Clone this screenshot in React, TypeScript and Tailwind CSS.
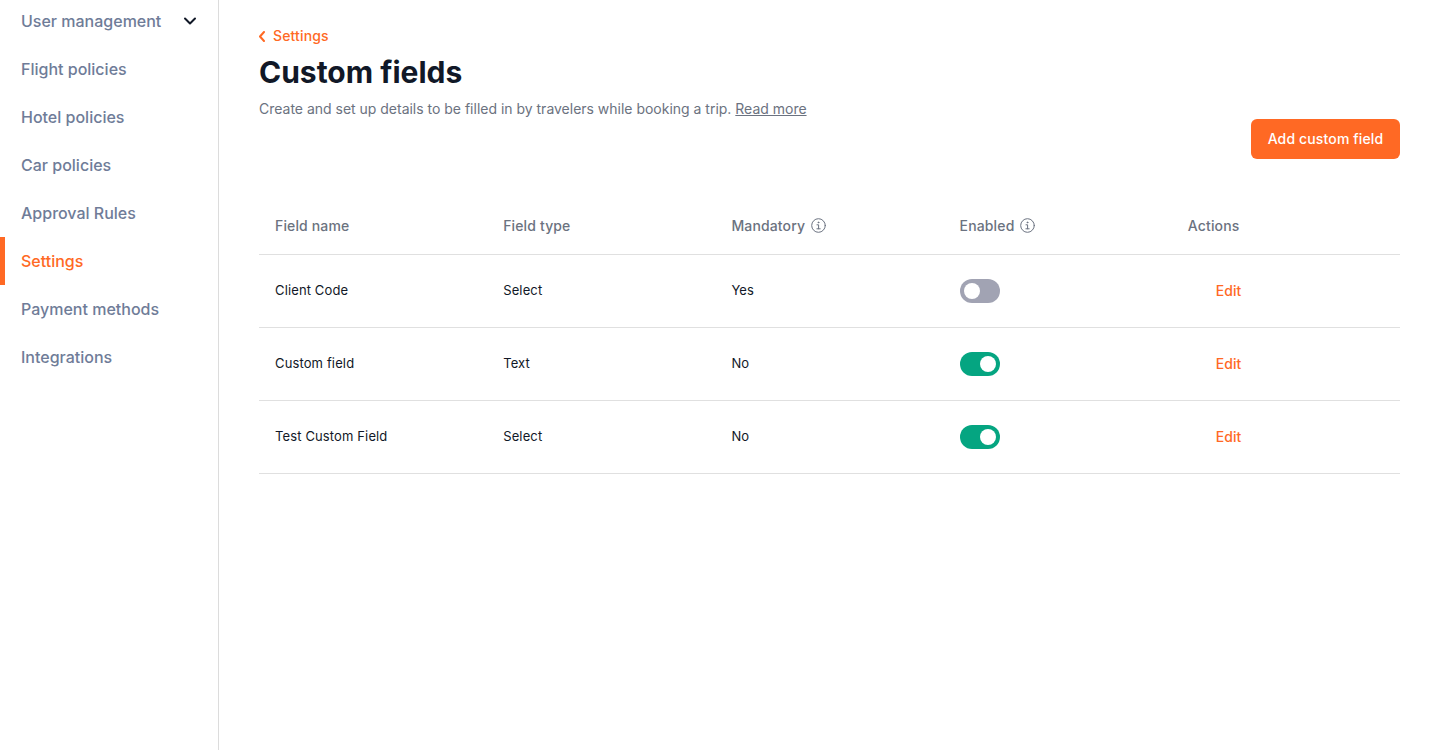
import React from 'react';

const navItems = ['User management', 'Flight policies', 'Hotel policies', 'Car policies', 'Approval Rules', 'Settings', 'Payment methods', 'Integrations'];

const rows = [
  { name: 'Client Code', type: 'Select', mandatory: 'Yes', enabled: false },
  { name: 'Custom field', type: 'Text', mandatory: 'No', enabled: true },
  { name: 'Test Custom Field', type: 'Select', mandatory: 'No', enabled: true },
];

const InfoIcon = () => (
  <svg width="15" height="15" viewBox="0 0 15 15" fill="none" stroke="#6b7280" strokeWidth="1" strokeLinecap="round" strokeLinejoin="round">
    <circle cx="7.5" cy="7.5" r="6.8" />
    <path d="M6 6.8H7.6V10.8M5.9 10.8H9.2" />
    <circle cx="7.4" cy="4.4" r="0.45" fill="#6b7280" />
  </svg>
);

const Toggle: React.FC<{ on: boolean }> = ({ on }) => (
  <div className={`flex h-6 w-10 items-center rounded-full px-1 ${on ? 'justify-end bg-[#05a581]' : 'justify-start bg-[#a1a3b3]'}`}>
    <div className="h-4 w-4 rounded-full bg-white" />
  </div>
);

export default function App() {
  return (
    <div className="flex h-[750px] overflow-hidden bg-white font-['Inter',sans-serif]">
      {/* Sidebar */}
      <aside className="w-[219px] shrink-0 border-r border-[#dcdcdc]">
        <nav className="-mt-[3px]">
          {navItems.map((item, i) => (
            <div
              key={item}
              className={`flex h-12 items-center justify-between border-l-[5px] pl-4 pr-[21px] text-base font-medium ${
                item === 'Settings' ? 'border-[#ff6924] text-[#ff6924]' : 'border-transparent text-[#6f7c98]'
              }`}
            >
              <span>{item}</span>
              {i === 0 && (
                <svg width="14" height="14" viewBox="0 0 14 14" fill="none" stroke="#111827" strokeWidth="2" strokeLinecap="round" strokeLinejoin="round">
                  <path d="M2 4.5L7 9.5L12 4.5" />
                </svg>
              )}
            </div>
          ))}
        </nav>
      </aside>

      {/* Main */}
      <main className="flex-1 px-10 pt-[26px]">
        <div className="flex h-5 items-center gap-2 text-sm font-medium tracking-[0.01em] text-[#ff6924]">
          <svg width="6" height="11" viewBox="0 0 6 11" fill="none" stroke="#ff6924" strokeWidth="2" strokeLinecap="round" strokeLinejoin="round">
            <path d="M5 1L1 5.5L5 10" />
          </svg>
          <span>Settings</span>
        </div>
        <h1 className="mt-2 text-[30px] leading-9 font-bold text-[#111827]">Custom fields</h1>
        <p className="mt-[9px] text-sm leading-5 tracking-[-0.01px] text-[#6b7280]">
          Create and set up details to be filled in by travelers while booking a trip.{' '}
          <span className="underline">Read more</span>
        </p>

        <div className="flex justify-end">
          <button className="h-10 w-[149px] rounded-md bg-[#ff6924] text-sm font-medium tracking-[0.01em] text-white">Add custom field</button>
        </div>

        <div className="mt-10">
          <div className="grid h-[56px] grid-cols-5 items-center border-b border-[#e0e0e0] pb-0.5 text-sm font-medium tracking-[0.01em] text-[#6b7280]">
            <div className="px-4">Field name</div>
            <div className="px-4">Field type</div>
            <div className="flex items-center gap-[6px] px-4">
              Mandatory <InfoIcon />
            </div>
            <div className="flex items-center gap-[6px] px-4">
              Enabled <InfoIcon />
            </div>
            <div className="px-4">Actions</div>
          </div>
          {rows.map((row) => (
            <div key={row.name} className="grid h-[73px] grid-cols-5 items-center border-b border-[#e0e0e0] text-[13px] tracking-[0.01em] text-[#111827]">
              <div className="px-4">{row.name}</div>
              <div className="px-4">{row.type}</div>
              <div className="px-4">{row.mandatory}</div>
              <div className="px-4">
                <Toggle on={row.enabled} />
              </div>
              <div className="pl-11 text-sm font-medium tracking-normal text-[#ff6924]">Edit</div>
            </div>
          ))}
        </div>
      </main>
    </div>
  );
}
